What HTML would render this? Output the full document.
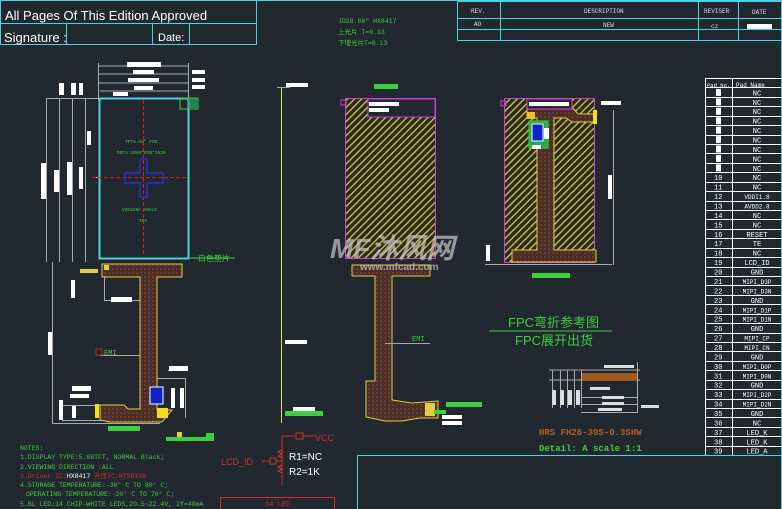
<!DOCTYPE html>
<html><head><meta charset="utf-8"><style>
html,body{margin:0;padding:0;background:#212830;}
svg{display:block}
text{font-family:"Liberation Sans","Noto Sans CJK SC",sans-serif}
.m{font-family:"Liberation Mono","Noto Sans CJK SC",monospace}
</style></head><body>
<svg width="782" height="509" viewBox="0 0 782 509" xmlns="http://www.w3.org/2000/svg">
<defs>
<pattern id="yh" width="5" height="5" patternUnits="userSpaceOnUse" patternTransform="rotate(45)"><rect width="5" height="5" fill="#2a2a22"/><rect width="1.4" height="5" fill="#c8c040"/></pattern>
<pattern id="bh" width="4" height="4" patternUnits="userSpaceOnUse"><rect width="4" height="4" fill="#4a2e2a"/><rect width="2" height="2" fill="#6a3c30"/></pattern>
</defs>
<rect width="782" height="509" fill="#212830"/>
<g stroke="#4fd2dc" stroke-width="1" fill="none">
<rect x="0.5" y="0.5" width="256" height="44"/>
<line x1="0" y1="23.5" x2="256" y2="23.5"/>
<line x1="66.5" y1="23" x2="66.5" y2="44"/>
<line x1="152.5" y1="23" x2="152.5" y2="44"/>
<line x1="189.5" y1="23" x2="189.5" y2="44"/>
</g>
<text x="5" y="20" fill="#fff" font-size="13">All Pages Of This Edition Approved</text>
<text x="4" y="42" fill="#fff" font-size="13">Signature :</text>
<text x="158" y="41" fill="#fff" font-size="11">Date:</text>
<g stroke="#4fd2dc" stroke-width="1" fill="none">
<line x1="256" y1="0.5" x2="782" y2="0.5"/>
<rect x="457.5" y="1.5" width="324" height="39"/>
<line x1="457" y1="18.5" x2="782" y2="18.5"/>
<line x1="457" y1="29.5" x2="782" y2="29.5"/>
<line x1="500.5" y1="1" x2="500.5" y2="41"/>
<line x1="698.5" y1="1" x2="698.5" y2="41"/>
<line x1="738.5" y1="1" x2="738.5" y2="41"/>
</g>
<g fill="#ddd" font-size="6" class="m">
<text x="471" y="13" class="m">REV.</text><text x="584" y="13" class="m">DESCRIPTION</text>
<text x="704" y="13" class="m">REVISER</text><text x="752" y="14" class="m">DATE</text>
<text x="474" y="26" class="m">AO</text><text x="603" y="27" class="m">NEW</text><text x="711" y="28" class="m">cz</text>
</g>
<rect x="747" y="24" width="25" height="5" fill="#fff"/>
<g fill="#3ecf3e" font-size="6.5" class="m">
<text x="338" y="23" class="m">JD28.88" HX8417</text>
<text x="338" y="34" class="m">上光片 T=0.13</text>
<text x="338" y="45" class="m">下增光片T=0.13</text>
</g>
<g stroke="#aaa" stroke-width="1" fill="none">
<line x1="98" y1="66" x2="189" y2="66"/><line x1="98" y1="74" x2="189" y2="74"/><line x1="98" y1="83" x2="189" y2="83"/><line x1="100" y1="91" x2="189" y2="91"/>
<line x1="98.5" y1="63" x2="98.5" y2="100"/><line x1="188.5" y1="63" x2="188.5" y2="100"/>
<line x1="46" y1="98.5" x2="100" y2="98.5"/>
<line x1="46.5" y1="98" x2="46.5" y2="262"/><line x1="59.5" y1="98" x2="59.5" y2="262"/>
<line x1="72.5" y1="98" x2="72.5" y2="262"/><line x1="85.5" y1="98" x2="85.5" y2="262"/>
<line x1="92" y1="177.5" x2="100" y2="177.5"/>
<line x1="52.5" y1="262" x2="52.5" y2="423"/><line x1="52" y1="423.5" x2="160" y2="423.5"/>
<line x1="104.5" y1="275" x2="104.5" y2="300"/><line x1="104" y1="300.5" x2="140" y2="300.5"/>
<line x1="100" y1="355.5" x2="148" y2="355.5"/>
<line x1="62" y1="405.5" x2="102" y2="405.5"/><line x1="62" y1="420.5" x2="102" y2="420.5"/>
<line x1="157" y1="378.5" x2="185" y2="378.5"/><line x1="185.5" y1="378" x2="185.5" y2="418"/>
<line x1="168" y1="370.5" x2="185" y2="370.5"/>
</g>
<g fill="#fff">
<rect x="127" y="62" width="34" height="5"/><rect x="133" y="70" width="21" height="4"/><rect x="128" y="78" width="31" height="4"/><rect x="134" y="86" width="19" height="4"/>
<rect x="192" y="70" width="13" height="4"/><rect x="192" y="78" width="13" height="4"/><rect x="192" y="85" width="13" height="4"/>
<rect x="113" y="92" width="15" height="4"/>
<rect x="59" y="83" width="5" height="12"/><rect x="71" y="83" width="5" height="12"/><rect x="79" y="83" width="4" height="12"/>
<rect x="87" y="131" width="4" height="14"/><rect x="41" y="163" width="5" height="36"/><rect x="54" y="170" width="5" height="22"/><rect x="67" y="162" width="5" height="33"/><rect x="79" y="167" width="4" height="22"/>
<rect x="71" y="280" width="4" height="18"/><rect x="48" y="332" width="4" height="23"/>
<rect x="111" y="297" width="21" height="5"/><rect x="142" y="298" width="10" height="4"/>
<rect x="72" y="386" width="19" height="5"/><rect x="70" y="394" width="19" height="4"/>
<rect x="59" y="400" width="4" height="20"/><rect x="72" y="406" width="4" height="12"/>
<rect x="169" y="366" width="19" height="5"/><rect x="171" y="388" width="4" height="20"/><rect x="180" y="388" width="4" height="20"/>
</g>
<rect x="99.5" y="98.5" width="89" height="160" fill="none" stroke="#4fd2dc" stroke-width="2"/>
<rect x="180" y="98" width="18" height="11" fill="none" stroke="#3ecf3e"/>
<rect x="188" y="98" width="9" height="10" fill="#2a6" opacity=".7"/>
<line x1="143.5" y1="100" x2="143.5" y2="256" stroke="#c22" stroke-dasharray="4,2"/>
<line x1="92" y1="177.5" x2="188" y2="177.5" stroke="#c22" stroke-dasharray="4,2"/>
<path d="M140 159h7v14h16v10h-16v14h-7v-14h-15v-10h15z" fill="none" stroke="#2233cc" stroke-width="1.5"/>
<g fill="#3ecf3e" font-size="4.5" class="m">
<text x="125" y="143" class="m">TFT5.88" FSD</text>
<text x="117" y="154" class="m">DOTS:1080*RGB*1920</text>
<text x="122" y="211" class="m">VIEWING ANGLE</text>
<text x="139" y="222" class="m">IPS</text>
</g>
<text x="198" y="261" fill="#3ecf3e" font-size="8">白色垫片</text>
<line x1="188" y1="258" x2="235" y2="258" stroke="#3ecf3e"/>
<!-- left FPC -->
<path d="M102 264H182V277H157V410H172L162 422H110L100 420V405H124L128 409H140V277H102Z" fill="url(#bh)" stroke="#e0d040"/>
<rect x="80" y="269" width="18" height="4" fill="#e0d040"/>
<rect x="104" y="265" width="5" height="5" fill="#e0d040"/>
<rect x="150" y="387" width="13" height="17" fill="#1022cc" stroke="#fff"/>
<rect x="157" y="408" width="11" height="10" fill="#f0e020"/>
<rect x="95" y="404" width="4" height="14" fill="#f0e020"/>
<rect x="108" y="426" width="32" height="5" fill="#3ecf3e"/>
<path d="M166 437h40v-4h8v8h-48z" fill="#3ecf3e"/><rect x="177" y="432" width="5" height="5" fill="#e0d040"/>
<text x="104" y="355" fill="#3ecf3e" font-size="7" class="m">EMI</text>
<rect x="96" y="349" width="6" height="6" fill="none" stroke="#c22"/>
<line x1="281.5" y1="87" x2="281.5" y2="423" stroke="#e0e040"/>
<line x1="277" y1="87.5" x2="290" y2="87.5" stroke="#aaa"/>
<rect x="286" y="83" width="22" height="4" fill="#fff"/>
<rect x="285" y="340" width="22" height="4" fill="#fff"/>
<rect x="285" y="411" width="38" height="5" fill="#3ecf3e"/><rect x="293" y="407" width="22" height="4" fill="#fff"/>
<rect x="345.5" y="98.5" width="90" height="160" fill="url(#yh)" stroke="#d040d0"/>
<rect x="368" y="99" width="67" height="18" fill="#212830" stroke="#d040d0"/>
<rect x="369" y="102" width="30" height="4" fill="#fff"/><rect x="369" y="108" width="20" height="4" fill="#fff"/>
<rect x="374" y="84" width="24" height="5" fill="#3ecf3e"/>
<rect x="341" y="100" width="5" height="5" fill="none" stroke="#d040d0"/>
<path d="M352 265H430V276H392V400L412 403L438 401V418H420L402 421H385L366 417V381H375V276H352Z" fill="url(#bh)" stroke="#e0d040"/>
<rect x="425" y="403" width="10" height="13" fill="#e0d040"/>
<rect x="446" y="402" width="36" height="5" fill="#3ecf3e"/>
<rect x="434" y="410" width="12" height="4" fill="#3ecf3e"/><rect x="442" y="415" width="20" height="4" fill="#fff"/><rect x="442" y="421" width="20" height="4" fill="#fff"/>
<text x="412" y="341" fill="#3ecf3e" font-size="7" class="m">EMI</text>
<line x1="385" y1="343.5" x2="430" y2="343.5" stroke="#aaa"/>
<rect x="504.5" y="98.5" width="90" height="164" fill="url(#yh)" stroke="#d040d0"/>
<path d="M527 99H572V107L578 114H594V122H572L566 118H554V250H596V262H512V250H537V118H527Z" fill="url(#bh)" stroke="#e0d040"/>
<rect x="527" y="99" width="45" height="10" fill="#212830" stroke="#d040d0"/>
<rect x="529" y="102" width="40" height="4" fill="#fff"/>
<rect x="529" y="121" width="19" height="27" fill="#2a4" stroke="#3ecf3e"/>
<rect x="532" y="124" width="11" height="17" fill="#1022cc" stroke="#fff"/>
<rect x="544" y="128" width="5" height="11" fill="#fff"/><rect x="532" y="145" width="9" height="4" fill="#fff"/>
<rect x="527" y="112" width="8" height="7" fill="#f0c020"/>
<rect x="593" y="110" width="4" height="14" fill="#f0e020"/>
<rect x="501" y="101" width="5" height="5" fill="none" stroke="#d040d0"/>
<rect x="601" y="101" width="20" height="4" fill="#fff"/>
<line x1="613.5" y1="110" x2="613.5" y2="265" stroke="#aaa"/>
<rect x="608" y="175" width="4" height="24" fill="#fff"/>
<rect x="486" y="245" width="4" height="16" fill="#fff"/>
<line x1="485" y1="264.5" x2="612" y2="264.5" stroke="#aaa"/>
<rect x="532" y="273" width="38" height="5" fill="#3ecf3e"/>
<g fill="#3ecf3e" font-size="13">
<text x="508" y="327">FPC弯折参考图</text>
<text x="515" y="345">FPC展开出货</text>
</g>
<line x1="489" y1="331" x2="612" y2="331" stroke="#3ecf3e"/>
<g stroke="#aaa" fill="none">
<line x1="549" y1="370" x2="640" y2="370"/><line x1="549" y1="380" x2="640" y2="380"/>
<line x1="552.5" y1="370" x2="552.5" y2="408"/><line x1="560.5" y1="370" x2="560.5" y2="408"/><line x1="567.5" y1="370" x2="567.5" y2="408"/><line x1="574.5" y1="370" x2="574.5" y2="408"/><line x1="581.5" y1="370" x2="581.5" y2="408"/>
<line x1="581" y1="412.5" x2="638" y2="412.5"/><line x1="581" y1="404.5" x2="638" y2="404.5"/><line x1="581" y1="397.5" x2="638" y2="397.5"/>
<line x1="637.5" y1="362" x2="637.5" y2="413"/>
</g>
<rect x="582" y="373" width="55" height="8" fill="#a05a20"/>
<g fill="#ddd"><rect x="604" y="365" width="30" height="3"/><rect x="552" y="390" width="4" height="15"/><rect x="560" y="390" width="4" height="15"/><rect x="568" y="390" width="4" height="15"/><rect x="576" y="390" width="4" height="15"/><rect x="590" y="387" width="20" height="3"/><rect x="602" y="396" width="22" height="3"/><rect x="602" y="402" width="22" height="3"/><rect x="598" y="408" width="24" height="3"/><rect x="641" y="405" width="18" height="3"/></g>
<text x="539" y="435" fill="#b06020" font-size="9" font-weight="bold" class="m">HRS FH26-39S-0.3SHW</text>
<text x="539" y="451" fill="#3ecf3e" font-size="9" font-weight="bold" class="m">Detail: A scale 1:1</text>
<g stroke="#fff" stroke-width="1" fill="none">
<rect x="705.5" y="78.5" width="76" height="377"/>
<line x1="732.5" y1="78" x2="732.5" y2="455"/>
</g>
<g id="rows" stroke="#fff" stroke-width="1"></g>
<g fill="#fff" font-size="7" class="m" id="pins"></g>
<g font-size="6.5" class="m">
<text x="20" y="450" fill="#3ecf3e" class="m">NOTES:</text>
<text x="20" y="459" fill="#3ecf3e" class="m">1.DISPLAY TYPE:5.88TFT, NORMAL Black;</text>
<text x="20" y="469" fill="#3ecf3e" class="m">2.VIEWING DIRECTION :ALL</text>
<text x="20" y="478" fill="#d03030" class="m">3.Driver IC:<tspan fill="#fff">HX8417</tspan>  升压IC:NT50198</text>
<text x="20" y="487" fill="#3ecf3e" class="m">4.STORAGE TEMPERATURE:-30° C TO 80° C;</text>
<text x="26" y="496" fill="#3ecf3e" class="m">OPERATING TEMPERATURE:-20° C TO 70° C;</text>
<text x="20" y="506" fill="#3ecf3e" class="m">5.BL LED:14 CHIP-WHITE LEDS,20.5~22.4V, If=40mA</text>
</g>
<g stroke="#d03030" fill="none">
<path d="M282 436V485M282 436H295M303 436H315M296 433h7v6h-7z M262 461H270M270 458h6v6h-6zM276 461H282M282 450l-4 2 4 2-4 2 4 2M282 465l-4 2 4 2-4 2 4 2"/>
<rect x="220.5" y="497.5" width="114" height="14"/>
</g>
<text x="315" y="441" fill="#d03030" font-size="9">VCC</text>
<text x="221" y="465" fill="#d03030" font-size="9">LCD_ID</text>
<text x="289" y="460" fill="#fff" font-size="10">R1=NC</text>
<text x="289" y="475" fill="#fff" font-size="10">R2=1K</text>
<text x="265" y="506" fill="#d03030" font-size="7" class="m">14 LED</text>
<rect x="357.5" y="455.5" width="426" height="55" fill="none" stroke="#4fd2dc"/>
<line x1="781.5" y1="0" x2="781.5" y2="509" stroke="#4fd2dc"/>
<text x="330" y="258" fill="#c8c8c8" opacity=".7" font-size="28" font-weight="bold" font-style="italic">MF沐风网</text>
<text x="360" y="270" fill="#c8c8c8" opacity=".7" font-size="10" font-weight="bold">www.mfcad.com</text>
<script>
var names=["NC","NC","NC","NC","NC","NC","NC","NC","NC","NC","NC","VDDI1.8","AVDD2.8","NC","NC","RESET","TE","NC","LCD_ID","GND","MIPI_D3P","MIPI_D3N","GND","MIPI_D1P","MIPI_D1N","GND","MIPI_CP","MIPI_CN","GND","MIPI_D0P","MIPI_D0N","GND","MIPI_D2P","MIPI_D2N","GND","NC","LED_K","LED_K","LED_A"];
var r=document.getElementById('rows'),p=document.getElementById('pins'),ns='http://www.w3.org/2000/svg',h=9.43;
function t(x,y,s,sz){var e=document.createElementNS(ns,'text');e.setAttribute('x',x);e.setAttribute('y',y);e.setAttribute('class','m');if(sz)e.setAttribute('font-size',sz);e.textContent=s;p.appendChild(e);}
t(707,87,"Pad No.",5.5);t(736,87,"Pad Name",6);
for(var i=0;i<39;i++){var y=78+h*(i+1);var l=document.createElementNS(ns,'line');l.setAttribute('x1',705);l.setAttribute('x2',782);l.setAttribute('y1',Math.round(y)+.5);l.setAttribute('y2',Math.round(y)+.5);r.appendChild(l);
var yy=y+h-1.5;if(i<9){var q=document.createElementNS(ns,'rect');q.setAttribute('x',716);q.setAttribute('y',y+1.5);q.setAttribute('width',5);q.setAttribute('height',7);q.setAttribute('fill','#fff');p.appendChild(q);}else t(714,yy,String(i+1));
var fs=names[i].length>6?6:7;t(757-names[i].length*fs*0.3,yy,names[i],fs);}
</script>
</svg>
</body></html>
